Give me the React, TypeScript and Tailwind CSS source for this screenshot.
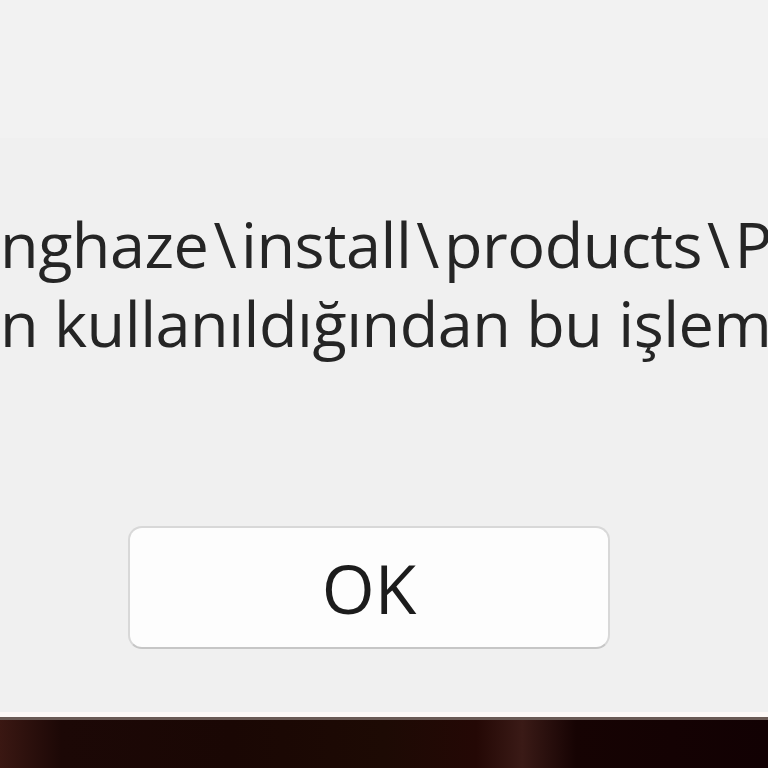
import React from 'react';

const Sep: React.FC = () => <span className="mx-[5px]">\</span>;

const App: React.FC = () => {
  return (
    <div
      className="w-[768px] h-[768px] overflow-hidden flex flex-col bg-[#f0f0f0]"
      style={{ fontFamily: '"Open Sans", "Noto Sans", sans-serif' }}
    >
      {/* dialog body */}
      <div className="h-[138px] bg-[#f2f2f2]" />
      <div className="flex-1 flex flex-col">
        <div className="mt-[66px] text-[63px] leading-[79px] text-[#252525] whitespace-nowrap overflow-hidden tracking-[-0.5px]">
          <p>
            nghaze<Sep />install<Sep />products<Sep />Pl
          </p>
          <p>n kullanıldığından bu işlemi</p>
        </div>
        <div className="mt-[164px] pl-[128px]">
          <button className="w-[482px] h-[123px] rounded-[14px] bg-[#fdfdfd] border-2 border-[#d8d8d8] border-b-[#c6c6c6] text-[68px] text-[#1c1c1c] flex items-center justify-center">
            OK
          </button>
        </div>
      </div>
      {/* taskbar edge */}
      <div className="h-[5px] bg-[#fdf8f6]" />
      <div className="h-[3px] bg-[#6a5a55]" />
      <div className="h-[48px] bg-[linear-gradient(90deg,#3a1712_0%,#1c0806_8%,#1a0704_30%,#1d0a04_50%,#240805_62%,#3a1a16_68%,#160303_75%,#120103_100%)]" />
    </div>
  );
};

export default App;
